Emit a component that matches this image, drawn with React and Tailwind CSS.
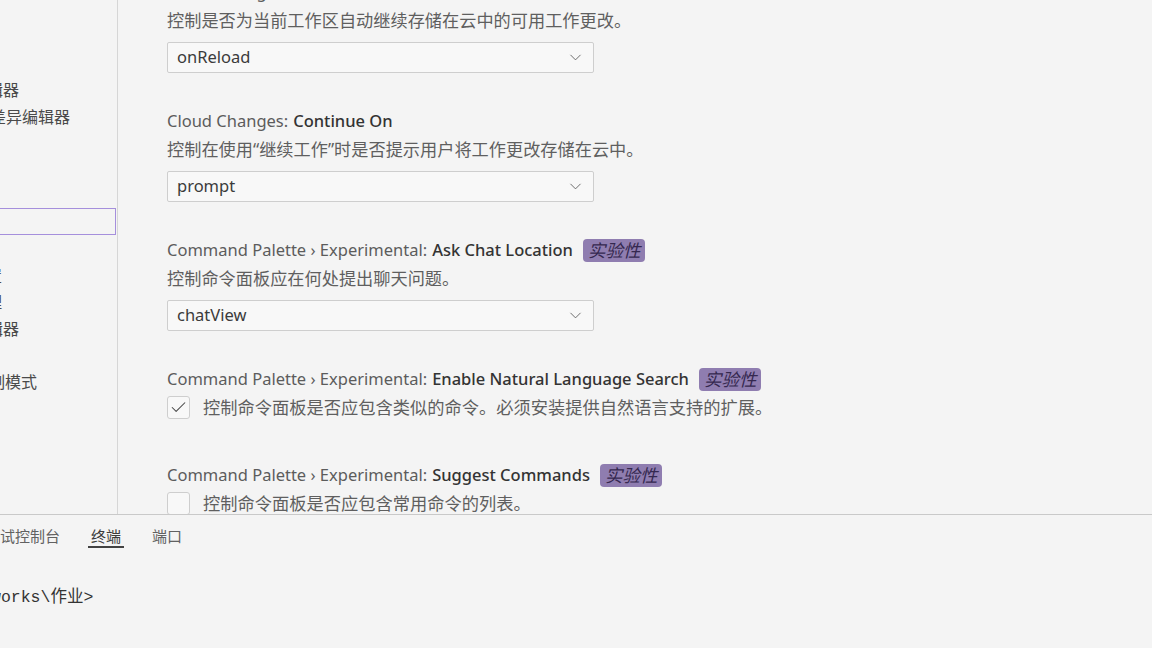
import { ChevronDown, Check } from "lucide-react";

const latin = "font-['Noto_Sans','Noto_Sans_CJK_SC',sans-serif]";
const cjk = "font-['Noto_Sans_CJK_SC','Noto_Sans',sans-serif]";

// Sidebar rows, already scrolled so the left edge of the text is cut off
const tocRows = [
  { text: "辑器", shift: "-ml-[13px]" },
  { text: "差异编辑器", shift: "-ml-[10px]" },
  { text: "" },
  { text: "" },
  { text: "" },
  { box: true },
  { text: "" },
  { text: "置", shift: "-ml-[14px]" },
  { text: "理", shift: "-ml-[14px]" },
  { text: "辑器", shift: "-ml-[13px]" },
  { text: "" },
  { text: "制模式", shift: "-ml-[11px]" },
];

function Badge() {
  return (
    <span
      className={`ml-[10px] inline-flex h-[23px] items-center rounded-[4px] bg-[#8f7db0] px-[5px] text-[17.5px] italic leading-none text-[#35284f] ${cjk}`}
    >
      实验性
    </span>
  );
}

function Title({ category, label, experimental }) {
  return (
    <div className={`flex h-[28px] items-center text-[16.5px] ${latin}`}>
      <span className="text-[#5c5c5c]">{category}</span>
      <span className="ml-[5px] font-medium text-[#333333]">{label}</span>
      {experimental && <Badge />}
    </div>
  );
}

function Description({ children }) {
  return (
    <div className={`h-[28px] leading-[28px] text-[17.2px] text-[#5f5f5f] ${cjk}`}>
      {children}
    </div>
  );
}

function SelectSetting({ category, label, desc, value, experimental }) {
  return (
    <div className="pb-[34px]">
      <Title category={category} label={label} experimental={experimental} />
      <Description>{desc}</Description>
      <div className="mt-[8px] flex h-[31px] w-[427px] items-center justify-between rounded-[2px] border border-[#cecece] bg-[#f8f8f8] pl-[9px] pr-[8px]">
        <span className={`text-[16.5px] text-[#3b3b3b] ${latin}`}>{value}</span>
        <ChevronDown size={19} strokeWidth={1.1} className="text-[#5a5a5a]" />
      </div>
    </div>
  );
}

function CheckSetting({ category, label, desc, checked }) {
  return (
    <div className="pb-[40px]">
      <Title category={category} label={label} experimental />
      <div className="flex h-[28px] items-center">
        <div className="flex h-[23px] w-[23px] items-center justify-center rounded-[3px] border border-[#cecece] bg-[#f8f8f8]">
          {checked && <Check size={19} strokeWidth={1.3} className="text-[#444444]" />}
        </div>
        <span className={`ml-[13px] text-[17.25px] text-[#5f5f5f] ${cjk}`}>{desc}</span>
      </div>
    </div>
  );
}

const Quote = ({ children }) => <span className="font-['Noto_Sans',sans-serif]">{children}</span>;

export default function App() {
  return (
    <div className="flex h-[648px] w-[1152px] flex-col overflow-hidden bg-[#f4f4f4]">
      {/* Settings editor */}
      <div className="flex h-[515px] shrink-0 overflow-hidden border-b border-[#c9c9c9]">
        {/* Table of contents */}
        <div className="w-[118px] shrink-0 overflow-hidden border-r border-[#d6d6d6] pt-[76px]">
          {tocRows.map((row, i) =>
            row.box ? (
              <div key={i} className="flex h-[26.5px] items-center">
                <div className="-ml-[4px] h-[27px] w-[120px] border border-[#a58fdc]" />
              </div>
            ) : (
              <div
                key={i}
                className={`h-[26.5px] whitespace-nowrap leading-[26.5px] text-[16px] text-[#4a4a4a] ${cjk} ${row.shift || ""}`}
              >
                {row.text}
              </div>
            )
          )}
        </div>

        {/* Settings list */}
        <div className="-mt-[22px] flex-1 pl-[49px]">
          <SelectSetting
            category="Cloud Changes:"
            label="Auto Resume"
            desc="控制是否为当前工作区自动继续存储在云中的可用工作更改。"
            value="onReload"
          />
          <SelectSetting
            category="Cloud Changes:"
            label="Continue On"
            desc={
              <>
                控制在使用<Quote>“</Quote>继续工作<Quote>”</Quote>时是否提示用户将工作更改存储在云中。
              </>
            }
            value="prompt"
          />
          <SelectSetting
            category="Command Palette › Experimental:"
            label="Ask Chat Location"
            desc="控制命令面板应在何处提出聊天问题。"
            value="chatView"
            experimental
          />
          <CheckSetting
            category="Command Palette › Experimental:"
            label="Enable Natural Language Search"
            desc="控制命令面板是否应包含类似的命令。必须安装提供自然语言支持的扩展。"
            checked
          />
          <CheckSetting
            category="Command Palette › Experimental:"
            label="Suggest Commands"
            desc="控制命令面板是否应包含常用命令的列表。"
          />
        </div>
      </div>

      {/* Panel */}
      <div className="flex-1">
        <div className={`flex gap-[31px] pt-[11px] text-[15px] text-[#616161] ${cjk}`}>
          <span className="-ml-[15px] leading-[20px]">调试控制台</span>
          <span className="-mx-[3px] border-b-2 border-[#424242] px-[3px] leading-[20px] text-[#3b3b3b]">
            终端
          </span>
          <span className="leading-[20px]">端口</span>
        </div>
        <div className="mt-[40px] -ml-[9px] whitespace-nowrap font-['Liberation_Mono','Noto_Sans_CJK_SC',monospace] text-[16.5px] leading-[20px] text-[#333333]">
          works\作业&gt;
        </div>
      </div>
    </div>
  );
}
